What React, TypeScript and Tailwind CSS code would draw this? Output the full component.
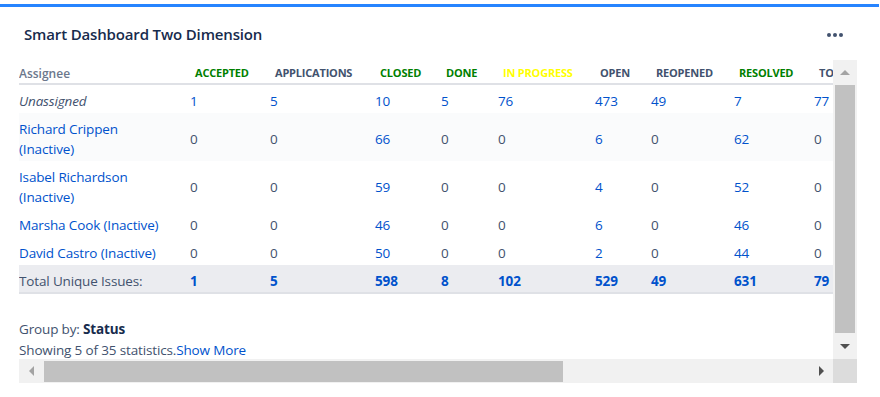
import React from "react";

const headers: { label: string; color: string; w: string }[] = [
  { label: "ACCEPTED", color: "text-[#008000]", w: "w-[80px]" },
  { label: "APPLICATIONS", color: "text-[#42526e]", w: "w-[105px]" },
  { label: "CLOSED", color: "text-[#008000]", w: "w-[66px]" },
  { label: "DONE", color: "text-[#008000]", w: "w-[57px]" },
  { label: "IN PROGRESS", color: "text-[#ffff00]", w: "w-[97px]" },
  { label: "OPEN", color: "text-[#42526e]", w: "w-[56px]" },
  { label: "REOPENED", color: "text-[#42526e]", w: "w-[83px]" },
  { label: "RESOLVED", color: "text-[#008000]", w: "w-[80px]" },
  { label: "TOTAL", color: "text-[#42526e]", w: "w-[80px]" },
];

const rows: { name: string[]; italic?: boolean; alt?: boolean; vals: string[] }[] = [
  { name: ["Unassigned"], italic: true, vals: ["1", "5", "10", "5", "76", "473", "49", "7", "77"] },
  { name: ["Richard Crippen", "(Inactive)"], alt: true, vals: ["0", "0", "66", "0", "0", "6", "0", "62", "0"] },
  { name: ["Isabel Richardson", "(Inactive)"], vals: ["0", "0", "59", "0", "0", "4", "0", "52", "0"] },
  { name: ["Marsha Cook (Inactive)"], vals: ["0", "0", "46", "0", "0", "6", "0", "46", "0"] },
  { name: ["David Castro (Inactive)"], vals: ["0", "0", "50", "0", "0", "2", "0", "44", "0"] },
];

const totals = ["1", "5", "598", "8", "102", "529", "49", "631", "79"];

function Tri({ dir, color }: { dir: "up" | "down" | "left" | "right"; color: string }) {
  const pts =
    dir === "up"
      ? "0,5 5,0 10,5"
      : dir === "down"
      ? "0,0 10,0 5,5"
      : dir === "left"
      ? "5,0 5,10 0,5"
      : "0,0 0,10 5,5";
  const w = dir === "up" || dir === "down" ? 10 : 5;
  const h = dir === "up" || dir === "down" ? 5 : 10;
  return (
    <svg width={w} height={h} viewBox={`0 0 ${w} ${h}`}>
      <polygon points={pts} fill={color} />
    </svg>
  );
}

export default function App() {
  return (
    <div className="w-[880px] h-[397px] bg-white overflow-hidden font-['Open_Sans',sans-serif] text-[#42526e]">
      <div className="mt-[4px] h-[3px] w-[879px] bg-[#2684ff]" />
      <div className="flex items-center justify-between h-[53px] pl-[24px] pr-[37px]">
        <div className="text-[15px] font-semibold text-[#172b4d] tracking-[-0.15px] pt-[2px]">
          Smart Dashboard Two Dimension
        </div>
        <div className="flex gap-[2px] pt-[2px]">
          <span className="w-[4px] h-[4px] rounded-full bg-[#42526e]" />
          <span className="w-[4px] h-[4px] rounded-full bg-[#42526e]" />
          <span className="w-[4px] h-[4px] rounded-full bg-[#42526e]" />
        </div>
      </div>
      <div className="ml-[19px] w-[838px] h-[323px] flex flex-col">
        <div className="flex h-[299px]">
          <div className="w-[814px] h-[299px] overflow-hidden">
            <div className="w-[875px]">
              <div className="flex h-[25px] items-center pt-[4px] border-b-2 border-[#dfe1e6]">
                <div className="w-[171px] shrink-0 text-[12px] font-semibold text-[#6b778c]">Assignee</div>
                {headers.map((h) => (
                  <div
                    key={h.label}
                    className={`${h.w} shrink-0 pl-[5px] text-[11px] font-bold tracking-[-0.2px] whitespace-nowrap ${h.color}`}
                  >
                    {h.label}
                  </div>
                ))}
              </div>
              {rows.map((r) => (
                <div
                  key={r.name.join(" ")}
                  className={`flex items-center pt-[6px] pb-[2px] text-[13.5px] leading-[20px] tracking-[-0.15px] ${r.alt ? "bg-[#fafbfc]" : ""}`}
                >
                  <div
                    className={`w-[171px] shrink-0 ${r.italic ? "italic text-[#42526e]" : "text-[#0052cc]"}`}
                  >
                    {r.name.map((l) => (
                      <div key={l} className="whitespace-nowrap">{l}</div>
                    ))}
                  </div>
                  {r.vals.map((v, i) => (
                    <div
                      key={i}
                      className={`${headers[i].w} shrink-0 ${v === "0" ? "text-[#42526e]" : "text-[#0052cc]"}`}
                    >
                      {v}
                    </div>
                  ))}
                </div>
              ))}
              <div className="flex items-center h-[29px] pt-[5px] bg-[#ebecf0] border-b-2 border-[#dfe1e6] text-[13.5px] tracking-[-0.15px]">
                <div className="w-[171px] shrink-0 text-[#42526e]">Total Unique Issues:</div>
                {totals.map((v, i) => (
                  <div key={i} className={`${headers[i].w} shrink-0 font-bold text-[#0052cc]`}>
                    {v}
                  </div>
                ))}
              </div>
            </div>
            <div className="mt-[25px] text-[13.5px] leading-[21px] tracking-[-0.15px]">
              <div>
                Group by: <span className="font-bold text-[#172b4d]">Status</span>
              </div>
              <div>
                Showing 5 of 35 statistics.<span className="text-[#0052cc]">Show More</span>
              </div>
            </div>
          </div>
          <div className="w-[24px] h-[299px] bg-[#f1f1f1] flex flex-col">
            <div className="h-[25px] flex items-center justify-center">
              <Tri dir="up" color="#a3a3a3" />
            </div>
            <div className="mx-[2px] h-[248px] bg-[#c1c1c1]" />
            <div className="flex-1 flex items-center justify-center">
              <Tri dir="down" color="#505050" />
            </div>
          </div>
        </div>
        <div className="flex h-[24px]">
          <div className="w-[814px] bg-[#f1f1f1] flex items-center">
            <div className="w-[25px] flex items-center justify-center">
              <Tri dir="left" color="#a3a3a3" />
            </div>
            <div className="w-[519px] h-[21px] bg-[#c1c1c1]" />
            <div className="flex-1" />
            <div className="w-[24px] flex items-center justify-center">
              <Tri dir="right" color="#505050" />
            </div>
          </div>
          <div className="w-[24px] bg-[#dcdcdc]" />
        </div>
      </div>
    </div>
  );
}
